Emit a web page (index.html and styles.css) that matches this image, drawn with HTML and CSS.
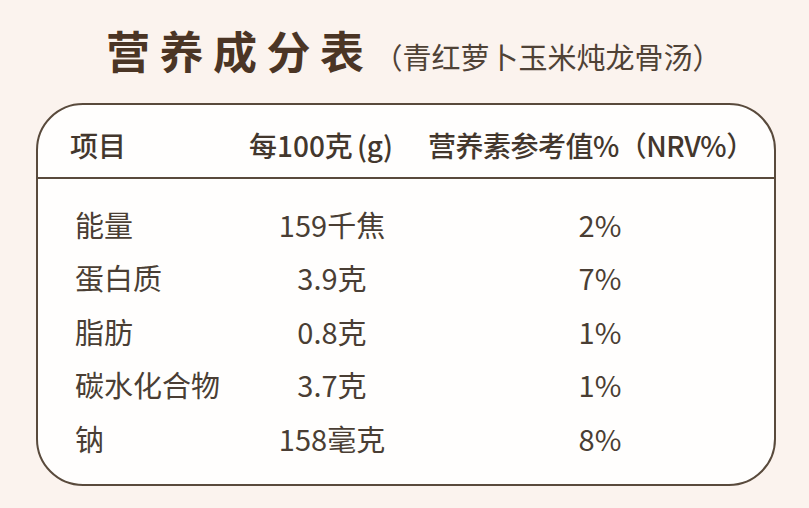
FILE: index.html
```html
<!DOCTYPE html>
<html lang="zh-CN">
<head>
<meta charset="utf-8">
<link rel="stylesheet" href="styles.css">
</head>
<body>
<div class="page">
  <div class="title-row">
    <h1 class="title">营养成分表</h1>
    <span class="subtitle">（青红萝卜玉米炖龙骨汤）</span>
  </div>
  <div class="card">
    <div class="head">
      <span class="h1">项目</span>
      <span class="h2">每100克<span class="paren">(g)</span></span>
      <span class="h3">营养素参考值%（NRV%）</span>
    </div>
    <div class="body">
      <span class="c1">能量</span><span class="c2">159千焦</span><span class="c3">2%</span>
      <span class="c1">蛋白质</span><span class="c2">3.9克</span><span class="c3">7%</span>
      <span class="c1">脂肪</span><span class="c2">0.8克</span><span class="c3">1%</span>
      <span class="c1">碳水化合物</span><span class="c2">3.7克</span><span class="c3">1%</span>
      <span class="c1">钠</span><span class="c2">158毫克</span><span class="c3">8%</span>
    </div>
  </div>
</div>
</body>
</html>
```
FILE: styles.css
```css
html, body {
  margin: 0;
  padding: 0;
  background: #fbf3ee;
}
body {
  width: 809px;
  height: 508px;
  overflow: hidden;
  font-family: "Noto Sans CJK SC", "Noto Sans", sans-serif;
  color: #4a3d32;
}
.page {
  padding: 22px 0 0 36px;
}
.title-row {
  display: flex;
  align-items: baseline;
  padding-left: 70px;
  height: 81px;
}
.title {
  margin: 0;
  font-size: 44px;
  font-weight: 700;
  letter-spacing: 9.5px;
  color: #4b3525;
  line-height: 56px;
}
.subtitle {
  font-size: 29px;
  font-weight: 400;
  color: #4f4236;
  margin-left: 0;
}
.card {
  width: 736px;
  height: 379px;
  border: 2px solid #594a3c;
  border-radius: 47px;
  background: #fffefd;
  box-sizing: content-box;
}
.head {
  display: flex;
  align-items: center;
  height: 64px;
  padding-top: 8px;
  border-bottom: 2px solid #594a3c;
  font-size: 28px;
  font-weight: 500;
  color: #43372d;
  padding-left: 32px;
  white-space: nowrap;
}
.h1 { width: 176px; }
.h2 { width: 150px; text-align: center; }
.paren { margin-left: 4px; }
.h3 { width: 320px; text-align: center; margin-left: 32px; letter-spacing: -0.5px; }
.body {
  display: grid;
  grid-template-columns: 150px 214px 322px;
  grid-auto-rows: 53.5px;
  align-items: center;
  padding: 18px 0 0 37px;
  font-size: 29px;
  font-weight: 400;
  color: #4a3e34;
}
.c2, .c3 { text-align: center; }
```
